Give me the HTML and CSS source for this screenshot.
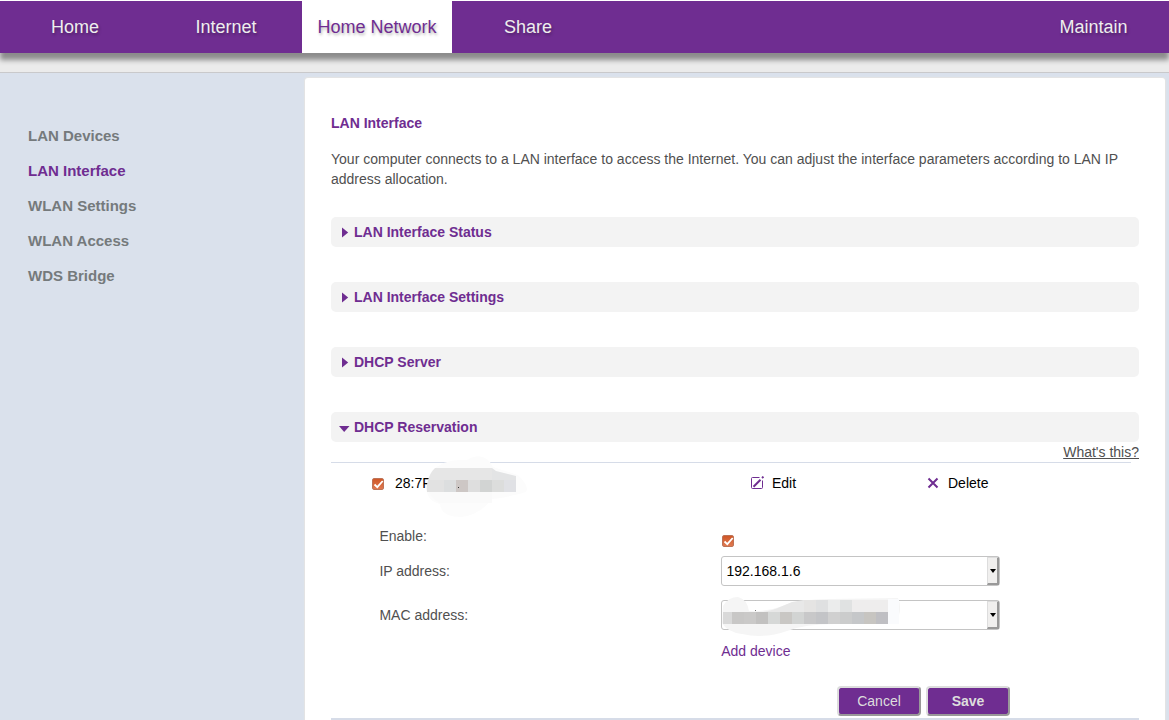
FILE: index.html
```html
<!DOCTYPE html>
<html lang="en">
<head>
<meta charset="utf-8">
<title>Home Network</title>
<link rel="stylesheet" href="styles.css">
</head>
<body>
<header class="top">
  <nav class="nav">
    <a class="tab">Home</a>
    <a class="tab">Internet</a>
    <a class="tab active">Home Network</a>
    <a class="tab">Share</a>
    <a class="tab last">Maintain</a>
  </nav>
</header>
<div class="page">
  <aside class="side">
    <a>LAN Devices</a>
    <a class="current">LAN Interface</a>
    <a>WLAN Settings</a>
    <a>WLAN Access</a>
    <a>WDS Bridge</a>
  </aside>
  <main class="panel">
    <h1>LAN Interface</h1>
    <p class="intro">Your computer connects to a LAN interface to access the Internet. You can adjust the interface parameters according to LAN IP address allocation.</p>
    <div class="section"><svg class="arrow" width="12" height="12"><path d="M3 1.500L9.200 6.500L3 11.500Z"/></svg>LAN Interface Status</div>
    <div class="section"><svg class="arrow" width="12" height="12"><path d="M3 1.500L9.200 6.500L3 11.500Z"/></svg>LAN Interface Settings</div>
    <div class="section"><svg class="arrow" width="12" height="12"><path d="M3 1.500L9.200 6.500L3 11.500Z"/></svg>DHCP Server</div>
    <div class="section open"><svg class="arrow" width="12" height="12"><path d="M0 5H10.500L5.200 11Z"/></svg>DHCP Reservation</div>
    <div class="help"><a>What's this?</a></div>
    <div class="rule"></div>
    <div class="entry">
      <span class="check"><svg width="13" height="13"><path d="M2.500 6.500L5.300 9.200L10.700 3"/></svg></span>
      <span class="mac">28:7F
        <svg class="mask" width="102" height="66" viewBox="425 454 102 66">
          <path fill="#fcfcfc" d="M431 472Q442 460 460 460Q468 461 470 458Q486 452 493 467L518 475Q530 487 526 492Q510 497 492 499Q481 514 462 517Q441 517 440 504Q426 500 427 489Z"/>
          <path fill="#e6e6e6" d="M435 468H492V480H428Q430 473 435 468Z"/>
          <path fill="#e3e4e5" d="M492 468L496 471L516 476V480H492Z"/>
          <path fill="#e2e2e2" d="M428 480H444V492H427Q426 487 428 480Z"/>
          <path fill="#dcdedf" d="M444 480H456V492H444Z"/>
          <path fill="#cdc7c5" d="M456 480H468V492H456Z"/>
          <path fill="#dedede" d="M468 480H480V492H468Z"/>
          <path fill="#d2d4d3" d="M480 480H492V492H480Z"/>
          <path fill="#dcdddc" d="M492 480H504V492H492Z"/>
          <path fill="#e0e1e5" d="M504 480H516V492H504Z"/>
          <path fill="#fafafa" d="M429 492H492V503H440Q433 500 429 492Z"/>
          <path fill="#333" d="M458 487H459V488H458Z"/>
        </svg>
      </span>
      <a class="action edit"><svg width="14" height="14"><path d="M9.500 1.500H2.500Q1.500 1.500 1.500 2.500V11.500Q1.500 12.500 2.500 12.500H11.500Q12.500 12.500 12.500 11.500V4.500"/><path class="pen" d="M3.500 10.800L10.500 3.800M12 2L13.500 .7"/></svg>Edit</a>
      <a class="action delete"><svg width="12" height="12"><path class="cross" d="M1.500 1.500L10.500 10.500M10.500 1.500L1.500 10.500"/></svg>Delete</a>
    </div>
    <div class="form">
      <div class="row first"><label>Enable:</label><span class="check"><svg width="13" height="13"><path d="M2.500 6.500L5.300 9.200L10.700 3"/></svg></span></div>
      <div class="row"><label>IP address:</label><div class="select">192.168.1.6<span class="drop"></span></div></div>
      <div class="row"><label>MAC address:</label><div class="select"><span class="drop"></span>
        <svg class="mask-field" width="185" height="44" viewBox="720 595 185 44">
          <path fill="#f5f5f5" d="M723 606Q728 597 738 597Q747 599 749 611Q766 612 783 606Q800 599 830 599L898 598Q903 609 896 623L835 624Q805 624 787 631Q764 639 742 634Q727 632 722 623Z"/>
          <path fill="#e8e8e8" d="M780 607L792 602L804 600V612H763Q774 610 780 607Z"/>
          <path fill="#e5e4e3" d="M804 600H816V612H804Z"/><path fill="#dfe0e1" d="M816 600H828V612H816Z"/>
          <path fill="#ebecec" d="M828 600H840V612H828Z"/><path fill="#e0e2e2" d="M840 600H852V612H840Z"/>
          <path fill="#eeeded" d="M852 600H888V612H852Z"/>
          <path fill="#d9d9d9" d="M723 612H732V624H723Z"/><path fill="#c8c7c6" d="M732 612H744V624H732Z"/>
          <path fill="#cac9c8" d="M744 612H756V624H744Z"/><path fill="#c2c1c0" d="M756 612H768V624H756Z"/>
          <path fill="#d6d8d7" d="M768 612H780V624H768Z"/><path fill="#c9c7c4" d="M780 612H792V624H780Z"/>
          <path fill="#d2d4d3" d="M792 612H804V624H792Z"/><path fill="#c8c8c9" d="M804 612H816V624H804Z"/>
          <path fill="#c3c4c7" d="M816 612H828V624H816Z"/><path fill="#d0d0d0" d="M828 612H840V624H828Z"/>
          <path fill="#cbcccc" d="M840 612H852V624H840Z"/><path fill="#c5c7c9" d="M852 612H864V624H852Z"/>
          <path fill="#c7c5c1" d="M864 612H876V624H864Z"/><path fill="#bfbfc3" d="M876 612H888V624H876Z"/>
          <path fill="#fafbfd" d="M888 599H899V624H888Z"/>
          <path fill="#777" d="M755 610H756V611H755Z"/>
        </svg>
      </div></div>
      <a class="add">Add device</a>
    </div>
    <div class="buttons"><button>Cancel</button><button class="save">Save</button></div>
    <div class="endrule"></div>
  </main>
</div>
</body>
</html>
```

FILE: styles.css
```css
* { box-sizing: border-box; }
body { margin: 0; height: 720px; overflow: hidden; background: #fff; font: 14px/20px "Liberation Sans", Arial, sans-serif; color: #505050; }
.top { height: 73px; padding-top: 1px; border-bottom: 1px solid #c9c9cb; background: linear-gradient(#fff 1px, #ebebeb 1px); overflow: hidden; }
.nav { display: flex; height: 52px; background: #6f2d91; box-shadow: 0 7px 5px #8c8c8c; }
.tab { width: 151px; text-align: center; font-size: 18px; line-height: 53px; color: #eee; text-shadow: 1px 2px 3px rgba(0,0,0,.3); white-space: nowrap; }
.tab:first-child { padding-right: 1px; }
.tab:nth-child(2) { padding-right: 1px; }
.tab:nth-child(4) { padding-left: 1px; }
.tab.active { width: 150px; background: #fff; color: #6f2d91; }
.last { margin-left: auto; }
.page { display: flex; height: 647px; padding-top: 5px; background: #dae1ec; }
.side { width: 305px; padding: 40px 28px; display: flex; flex-direction: column; }
.side a { height: 35px; font-size: 15px; line-height: 35px; font-weight: bold; color: #757a7c; }
.side .current { color: #6f2d91; }
.panel { width: 860px; height: 650px; padding: 35px 26px 0; background: #fff; border-radius: 3px 3px 0 0; box-shadow: 0 0 1px 1px #e4e4e4; }
h1 { margin: 0; font-size: 14px; line-height: 20px; color: #6f2d91; }
.intro { margin: 16px 0 28px; }
.section { height: 30px; margin-bottom: 35px; padding-left: 8px; display: flex; align-items: center; gap: 3px; border-radius: 5px; background: #f3f3f3; color: #6f2d91; font-weight: bold; }
.arrow { fill: #6f2d91; }
.open { margin-bottom: 0; }
.help { height: 20px; text-align: right; text-decoration: underline; }
.rule { width: 800px; height: 1px; background: #d6dce8; }
.entry { display: grid; grid-template-columns: 23px 355px 177px 1fr; align-items: center; height: 40px; padding-left: 41px; color: #000; }
.check { width: 12px; height: 12px; display: block; border-radius: 2px; border: 1px solid #bd7357; background: linear-gradient(#cf5727, #df7950); }
.check svg { display: block; margin: -1px; fill: none; stroke: #fff; stroke-width: 1.8; }
.entry .check { margin-top: 2px; }
.mac { position: relative; }
.mask { position: absolute; left: 30px; top: -19px; }
.action { display: flex; align-items: center; gap: 8px; fill: none; stroke: #6f2d91; }
.delete { gap: 9px; }
.pen, .cross { stroke-width: 2; }
.form { padding: 23px 0 0 48.400px; }
.row { display: flex; height: 44px; align-items: center; }
.row label { width: 341.600px; }
.first { height: 20px; margin-bottom: 3px; }
.first .check { margin: 10px 0 0 1px; }
.select { position: relative; width: 279px; height: 30px; padding-left: 4.500px; border: 1px solid #c4c4c4; border-radius: 3px; color: #000; line-height: 28px; }
.drop { position: absolute; z-index: 1; right: 0; top: 0; width: 12px; height: 28px; border: 1px solid #ddd; border-right: 2px solid #999; border-bottom: 2px solid #999; background: #f0efee; }
.drop::after { content: ""; position: absolute; left: 2px; top: 11px; border: 3.500px solid transparent; border-top: 4px solid #000; border-bottom: 0; }
.mask-field { position: absolute; left: -2px; top: -6px; }
.add { display: block; margin: 4px 0 0 341.800px; color: #6f2d91; }
.buttons { display: flex; gap: 5px; padding: 25px 0 0 506px; }
button { width: 84px; height: 30px; padding: 0; border: 2px solid; border-color: #ddd #999 #999 #ddd; border-radius: 4px; background: #6f2d91; color: #ddd; font: 14px "Liberation Sans", Arial, sans-serif; }
.save { font-weight: bold; }
.endrule { width: 808px; height: 2px; margin-top: 2px; background: #d6dce8; }
```
